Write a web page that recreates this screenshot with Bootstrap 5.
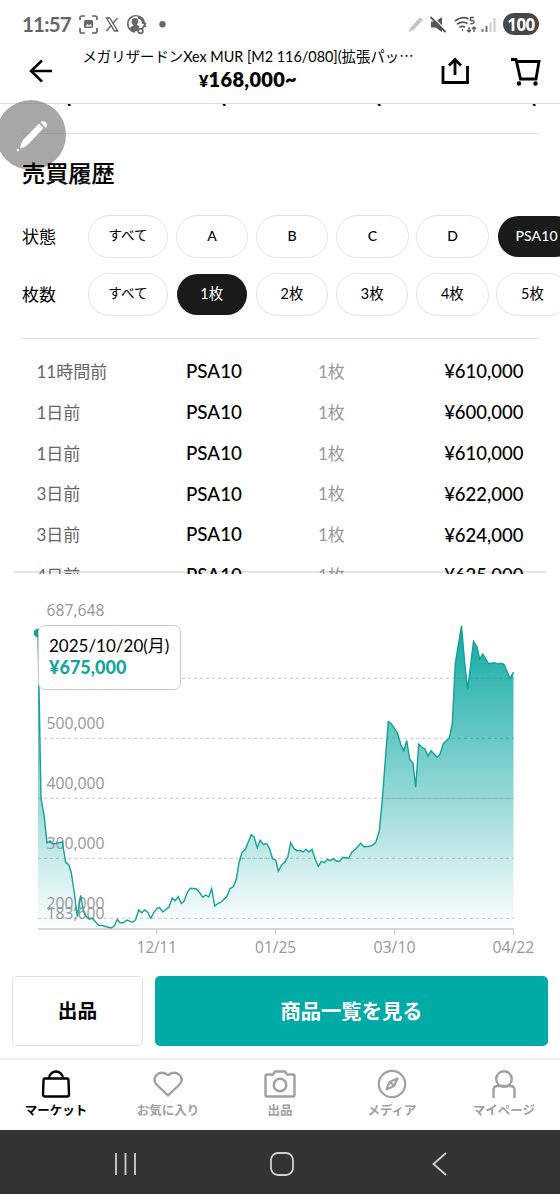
<!DOCTYPE html>
<html lang="ja">
<head>
<meta charset="utf-8">
<meta name="viewport" content="width=device-width, initial-scale=1">
<title>売買履歴</title>
<link href="https://cdn.jsdelivr.net/npm/bootstrap@5.3.0/dist/css/bootstrap.min.css" rel="stylesheet">
<style>
html,body{height:1200px;overflow:hidden}
body{width:560px;background:#fff;color:#000;font-family:Lato,"Noto Sans CJK JP",sans-serif;line-height:1}
svg{display:block;flex:none}
.statusbar{height:48px;padding:0 22px;color:#666}
.clock{font-size:20.5px;font-weight:700;width:48px;letter-spacing:-.8px;white-space:nowrap}
.battery{width:36px;height:22px;border-radius:11px;background:#484848;font-family:"Open Sans",sans-serif;font-size:17px;font-weight:700;letter-spacing:-.6px;margin-right:-1px}
.apphead{height:55.5px;border-bottom:1px solid #ddd}
.head-title{font-size:14.4px;line-height:18px;white-space:nowrap}
.head-price{font-size:20px;line-height:26px;font-weight:800;letter-spacing:.3px}
.head-price small{font-size:16px;font-weight:800}
.peek{height:2px;overflow:hidden}
.peek div{flex:none;width:155px;line-height:20px;margin-top:-15px;padding-left:67px;white-space:nowrap;font-size:18px;font-weight:700}
.rule{height:1.5px;background:#dedede;margin:0 22px}
.sec-title{font-size:23.2px;font-weight:500;-webkit-text-stroke:.2px #000;line-height:30px;position:relative;z-index:3}
.filter{height:43.5px;padding-left:22px;gap:8px}
.filter-name{width:58px;font-size:17px;flex:none}
.chip{flex:none;width:72.5px;height:43.5px;border:1.5px solid #e3e3e3;border-radius:22px;font-size:14px;font-weight:500;margin-right:-.3px;letter-spacing:.1px}
.chip.all{width:80px;font-size:13.6px}
.chip.all,.counts .chip{font-weight:400}
.counts .chip{font-size:14.4px}
.counts .chip.all{font-size:13.6px}
.chip.on{background:#1a1a1a;color:#fff;border:0;height:41px;width:70px;margin:0 1px}
.chip.wide{width:78px}
.history{height:224px;overflow:hidden;padding-top:1px;position:relative;z-index:1}
.hrow{height:40.85px;padding:0 36.5px;font-size:17px}
.hrow .when{width:149.5px;color:#666}
.hrow .grade{width:132px;font-size:18.8px;font-weight:500}
.hrow .qty{color:#9a9a9a}
.hrow .amount{margin-left:auto;font-size:18.5px;font-weight:500}
.divider{height:2px;background:#e5e5e5;margin:-3.500px 14px 0}
.chartbox{height:402.5px}
.chartbox text{font-family:"Open Sans",sans-serif;font-size:15.8px;fill:#979797}
.tip{left:37.5px;top:51.5px;width:143px;height:65px;background:#fff;border:1.5px solid #c9c9c9;border-radius:7px;padding:11px 10.5px;font-size:17px}
.tip b{display:block;color:#10a69d;font-size:18px;font-weight:900;margin-top:4px}
.actions{padding:0 12px;height:82px;gap:12px}
.btn-x{height:70px;border-radius:5px;font-weight:700;font-size:19.7px;line-height:1;padding:0}
.sell{width:131px;border:1.5px solid #e0e0e0}
.view{background:#00aaa5;color:#fff;flex:1;font-size:20.3px}
.tabs{height:72px;border-top:2px solid #eee;color:#a0a0a0;font-size:12.5px;font-weight:700}
.tabs>div{width:112px;padding-top:8px}
.tabs svg{margin-bottom:5px}
.sysnav{height:64px;background:#333}
.pen{left:-4px;top:100px;width:70px;height:70px;background:rgba(130,130,130,.7);border-radius:50%;z-index:2}
</style>
</head>
<body class="position-relative">
<div class="statusbar d-flex align-items-center">
 <span class="clock">11:57</span>
 <svg width="100" height="24" viewBox="0 0 100 24" class="ms-2" fill="none" stroke="#666" stroke-width="1.7">
  <path d="M2 8V6q0-2 2-2h3M14 4h3q2 0 2 2v2M19 16v3q0 2-2 2h-3M7 21H4q-2 0-2-2v-3"/><rect x="6" y="8" width="9" height="8" rx="1.5" fill="#666" stroke="none"/><path d="M7.500 14.500l2-2.500 1.500 1.500 1.500-1.500 1.500 2.500z" fill="#fff" stroke="none"/>
  <path d="M28.500 6h3.200l8 13h-3.200zM39.500 6l-5 5.800M33 13.500L28.500 19" stroke-width="1.400"/>
  <path d="M57 20a8.200 8.200 0 1 1 9-8.500" fill="none" stroke-width="1.400"/><path d="M58 4a8 8 0 0 0-6.500 13q1-3 4-3.500-3-3-1.500-6 2-2.500 5-1 2.500 2.500 0 6.500l2.500 1-2 5q-6 1.500-8.500-3-2.500-9 6-12z" fill="#666" stroke="none"/><path d="M60 5q6 1.500 5.500 7" stroke-width="3"/><circle cx="62.500" cy="19" r="2.300"/><path d="M64 17l4-6M66 13l2 2"/>
  <circle cx="84.500" cy="12.300" r="3.200" fill="#666" stroke="none"/>
 </svg>
 <svg width="94" height="24" viewBox="0 0 94 24" class="ms-auto" fill="none" stroke="#555" stroke-width="1.800">
  <path d="M3.500 20l2-4.500L15 5.500l3 2.500-9.500 10z" fill="#c4c4c4" stroke="none"/>
  <path d="M26 9.500h4.500L37 5v15l-6.500-4.500H26z" fill="#555" stroke="none"/><path d="M27 4l15 15.500" stroke="#fff" stroke-width="1.300"/><path d="M25.500 5l15 15"/>
  <path d="M50 9q7-5.500 13.500-2M52 12.300q5.500-4 10.500-.8M54.500 15.300q3-2 5.500 0M57 18h1"/><path d="M64 15v5m-2-2l2 2 2-2M69 20v-5m-2 2l2-2 2 2" stroke-width="1.300"/><path d="M69 5.500h-3.500v3h1.500q2.500 0 2 2.200-1 1.500-3.700.8" stroke-width="1.300"/>
  <path d="M77.500 17v3M81.500 14v6" stroke="#777" stroke-width="2"/><path d="M85.500 10.500V20M89.500 6v14" stroke="#ccc" stroke-width="2"/>
 </svg>
 <span class="battery d-flex align-items-center justify-content-center text-white ms-1">100</span>
</div>

<header class="apphead d-flex">
 <svg width="82" height="54" viewBox="0 0 82 54" fill="none" stroke="#000" stroke-width="2.500"><path d="M52 23H31M42 12.500L31 23l11 10.500"/></svg>
 <div class="text-center" style="width:332px">
  <div class="head-title">メガリザードンXex MUR [M2 116/080](拡張パッ⋯</div>
  <div class="head-price"><small>¥</small>168,000~</div>
 </div>
 <svg width="146" height="54" viewBox="414 48 146 54" fill="none" stroke="#000" stroke-width="2.800"><path d="M443 66v16.500h24.500V66M455 75V60M449 65.500l6-6 6 6"/><path d="M511 59.500h5l4.500 19.500h15.500l3-17.500h-22"/><circle cx="519" cy="83.500" r="2.200" fill="#000" stroke="none"/><circle cx="535.500" cy="83.500" r="2.200" fill="#000" stroke="none"/></svg>
</header>
<div class="peek d-flex"><div>,</div><div>,</div><div>,</div><div>,</div></div>
<div class="rule" style="margin-top:27px"></div>
<main>
 <h1 class="sec-title mb-0" style="margin:24px 0 0 22px">売買履歴</h1>
 <div class="filter d-flex align-items-center" style="margin-top:26.500px">
  <span class="filter-name">状態</span>
  <span class="chip all d-flex align-items-center justify-content-center">すべて</span>
  <span class="chip d-flex align-items-center justify-content-center">A</span>
  <span class="chip d-flex align-items-center justify-content-center">B</span>
  <span class="chip d-flex align-items-center justify-content-center">C</span>
  <span class="chip d-flex align-items-center justify-content-center">D</span>
  <span class="chip on wide d-flex align-items-center justify-content-center">PSA10</span>
 </div>
 <div class="filter counts d-flex align-items-center" style="margin-top:14.500px">
  <span class="filter-name">枚数</span>
  <span class="chip all d-flex align-items-center justify-content-center">すべて</span>
  <span class="chip on d-flex align-items-center justify-content-center">1枚</span>
  <span class="chip d-flex align-items-center justify-content-center">2枚</span>
  <span class="chip d-flex align-items-center justify-content-center">3枚</span>
  <span class="chip d-flex align-items-center justify-content-center">4枚</span>
  <span class="chip d-flex align-items-center justify-content-center">5枚</span>
 </div>
 <div class="rule" style="margin-top:21.500px;margin-bottom:11px"></div>
 <div class="history">
  <div class="hrow d-flex align-items-center"><span class="when">11時間前</span><span class="grade">PSA10</span><span class="qty">1枚</span><span class="amount">¥610,000</span></div>
  <div class="hrow d-flex align-items-center"><span class="when">1日前</span><span class="grade">PSA10</span><span class="qty">1枚</span><span class="amount">¥600,000</span></div>
  <div class="hrow d-flex align-items-center"><span class="when">1日前</span><span class="grade">PSA10</span><span class="qty">1枚</span><span class="amount">¥610,000</span></div>
  <div class="hrow d-flex align-items-center"><span class="when">3日前</span><span class="grade">PSA10</span><span class="qty">1枚</span><span class="amount">¥622,000</span></div>
  <div class="hrow d-flex align-items-center"><span class="when">3日前</span><span class="grade">PSA10</span><span class="qty">1枚</span><span class="amount">¥624,000</span></div>
  <div class="hrow d-flex align-items-center"><span class="when">4日前</span><span class="grade">PSA10</span><span class="qty">1枚</span><span class="amount">¥625,000</span></div>
 </div>
 <div class="divider"></div>
 <section class="chartbox position-relative" style="margin-top:1px">
  <svg width="560" height="401" viewBox="0 574 560 401">
   <defs>
    <linearGradient id="fade" x1="0" y1="625" x2="0" y2="929" gradientUnits="userSpaceOnUse"><stop offset="0" stop-color="#0ea9a3"/><stop offset="1" stop-color="#0ea9a3" stop-opacity="0"/></linearGradient>
    <path id="price" d="M38 633L41 798 44 815 47 843 50 841 53 844 62.300 842 65.700 862.300 68.700 864.700 71.300 872.700 74.300 893 77.300 916.700 80.700 895.300 83.300 910 86 916 89.300 919.300 92.300 918.300 98.700 925.300 102 925.500 111 928 114.300 926 117.300 919.300 120 922.700 123.300 922.700 126.700 920 132.700 922.300 135.700 919.700 138.700 909.700 141.700 912.700 144.700 910 147.700 912.300 150.700 918.300 154 912.300 157 908.300 159.700 907.700 162.700 912 169 907 172.300 898 175.300 900.700 178.300 896.700 181.300 903.300 184 901.300 187.300 892.300 190.300 888.300 196 888.700 199.300 892 202.700 897.300 205.700 895 208.700 897 211.700 888.700 214.700 906 217.700 903.700 221 902 227 896.300 230 888.700 233.300 886.700 236.300 879.300 239 862.700 242 852.300 245.300 849.300 251.300 834.700 254 836.700 257.300 847.700 260.300 840.300 263.300 844.700 266.700 843.300 269.700 849.300 272.700 859 275.700 860 278.300 871 281.700 865 284.700 862 287.700 857.300 290.700 842.700 294 848.700 297 850.700 300 850.300 303 852 306 849.300 309 852 312 849.300 315 858.700 318.300 866.300 321.300 861.300 324.300 862.700 327.300 859.300 330.300 860.700 333.300 858.700 336.700 861.300 339.700 861.300 342.700 857.300 348.700 858.300 352 852 355 849.700 360.700 843.300 364 846.700 370 846.300 373.300 844.700 376 841.700 379.300 831 382.300 800 385.300 760 388.300 721.500 391.300 723.700 397.300 732.700 400.700 744.300 403.700 750.700 406.700 740.700 409.700 759.300 413 763.300 415.700 787.300 418.700 744.300 422 747.300 425 749 428 756 431 750.700 437 757.300 440 754.300 443.300 743.700 449.300 738 452.300 723.300 455.300 663.300 461.500 625.800 464.700 663.300 467.700 689.300 473.500 641.500 477 646.700 479.700 659 482.700 654 488.700 663.700 494 662.700 498 664 501 663.300 504 664.300 510 678.300 513.500 672"/>
   </defs>
   <g stroke="#c6c6c6" stroke-dasharray="3 3"><path d="M38 678.300H513.500M38 738.300H513.500M38 798.300H513.500M38 858.300H513.500M38 918.300H513.500"/></g>
   <path fill="url(#fade)" id="area"/>
   <g stroke="#4a8f8b" stroke-opacity=".3" stroke-dasharray="3 3"><path d="M456 678.300H513.500M452 738.300H513.500M383 798.300H513.500M240 858.300H272"/></g>
   <g stroke="#c9c9c9" fill="none"><path d="M38 929H513.500" stroke-width="1.600"/><path d="M156.800 929v6M275.600 929v6M394.500 929v6M513.400 929v6"/></g>
   <g>
    <text x="46.500" y="615.500" textLength="58" lengthAdjust="spacingAndGlyphs">687,648</text>
    <text x="46.500" y="728.500" textLength="58" lengthAdjust="spacingAndGlyphs">500,000</text>
    <text x="46.500" y="788.500" textLength="58" lengthAdjust="spacingAndGlyphs">400,000</text>
    <text x="46.500" y="848.500" textLength="58" lengthAdjust="spacingAndGlyphs">300,000</text>
    <text x="46.500" y="908.500" textLength="58" lengthAdjust="spacingAndGlyphs">200,000</text>
    <text x="46.500" y="918.500" textLength="58" lengthAdjust="spacingAndGlyphs">183,600</text>
   </g>
   <use href="#price" fill="none" stroke="#15a098" stroke-width="1.400"/>
   <g text-anchor="middle"><text x="156.800" y="953" textLength="40" lengthAdjust="spacingAndGlyphs">12/11</text><text x="275.600" y="953" textLength="41" lengthAdjust="spacingAndGlyphs">01/25</text><text x="394.500" y="953" textLength="42" lengthAdjust="spacingAndGlyphs">03/10</text><text x="513.400" y="953" textLength="42" lengthAdjust="spacingAndGlyphs">04/22</text></g>
   <circle cx="38" cy="633" r="4.300" fill="#15a098"/>
  </svg>
  <div class="tip position-absolute">2025/10/20(月)<b>¥675,000</b></div>
 </section>
 <div class="actions d-flex">
  <button class="btn btn-x sell text-black">出品</button>
  <button class="btn btn-x view">商品一覧を見る</button>
 </div>
</main>
<nav class="tabs d-flex text-center">
 <div class="text-black d-flex flex-column align-items-center"><svg width="32" height="32" viewBox="0 0 32 32" fill="none" stroke="#000" stroke-width="2.400"><path d="M5 10.500h22q1.500 0 1.500 2l.500 14q0 2-2 2H5q-2 0-2-2l.500-14q0-2 1.500-2zM9 10.500a7 7 0 0 1 14 0"/></svg>マーケット</div>
 <div class="d-flex flex-column align-items-center"><svg width="32" height="32" viewBox="0 0 32 32" fill="none" stroke="#a0a0a0" stroke-width="2.400" stroke-linejoin="round"><path d="M16 27.500L4.500 16.500q-4-5 0-9.500t11.500 0q7-4.500 11.500 0t0 9.500z"/></svg>お気に入り</div>
 <div class="d-flex flex-column align-items-center"><svg width="32" height="32" viewBox="0 0 32 32" fill="none" stroke="#a0a0a0" stroke-width="2.400" stroke-linejoin="round"><path d="M3 6.500h6l2-3h10l2 3h6q1.500 0 1.500 1.500v19q0 1.500-1.500 1.500H3q-1.500 0-1.500-1.500V8q0-1.500 1.500-1.500z"/><circle cx="16" cy="17" r="6.300"/></svg>出品</div>
 <div class="d-flex flex-column align-items-center"><svg width="32" height="32" viewBox="0 0 32 32" fill="none" stroke="#a0a0a0" stroke-width="2.200" stroke-linejoin="round"><circle cx="16" cy="16" r="13.200"/><path d="M21.500 10.500l-8 3.500-3 7.500 7.500-3.500zM14 14l4 4"/></svg>メディア</div>
 <div class="d-flex flex-column align-items-center"><svg width="32" height="32" viewBox="0 0 32 32" fill="none" stroke="#a0a0a0" stroke-width="2.400"><circle cx="16" cy="11" r="7.800"/><path d="M5.500 30v-8q0-4 4-4h13q4 0 4 4v8"/></svg>マイページ</div>
</nav>
<div class="sysnav"><svg width="560" height="64" viewBox="0 0 560 64" fill="none" stroke="#d0d0d0" stroke-width="1.800"><path d="M116 23v22M125.500 23v22M135 23v22M446 23l-12.500 11L446 45"/><rect x="271" y="23" width="22" height="22" rx="7"/></svg></div>
<div class="pen position-absolute"><svg width="70" height="70" viewBox="-4 100 70 70" fill="#fff"><path d="M20 148.500q.500-5.500 3.500-9L39 123.500l4.500 4.500L28.500 144q-3.500 3.500-8.500 4.500zM40.500 122.300l1.300-1.300q2.500-.500 4.200 1.500t1 4l-1.500 1.200z"/><circle cx="18" cy="150" r="1.300"/></svg></div>
<script src="https://cdn.jsdelivr.net/npm/bootstrap@5.3.0/dist/js/bootstrap.bundle.min.js"></script>
<script>
// The filled area is the price line closed down to the time axis.
document.getElementById('area').setAttribute('d', document.getElementById('price').getAttribute('d') + 'V929H38Z');
</script>
</body>
</html>
